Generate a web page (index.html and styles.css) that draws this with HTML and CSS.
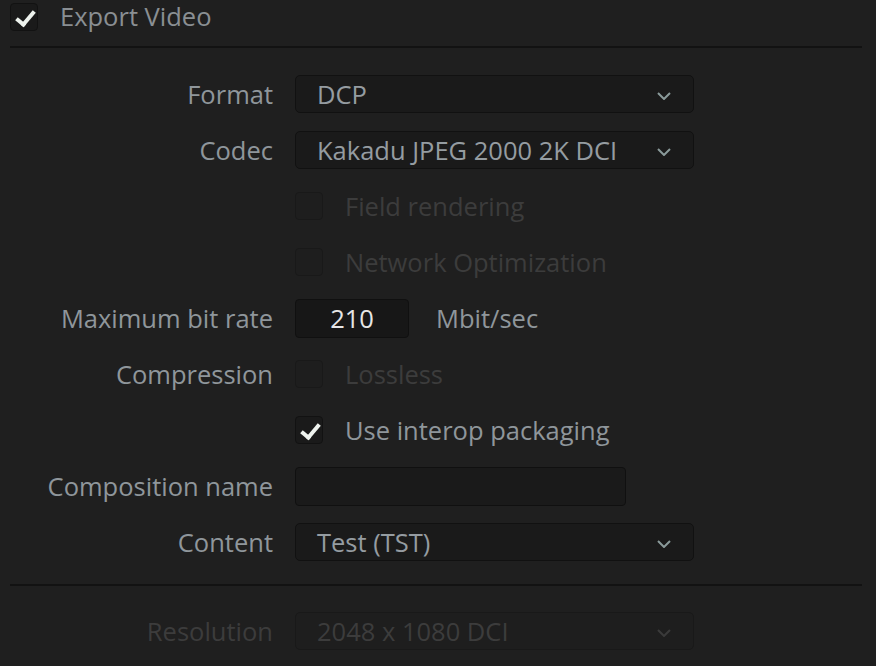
FILE: index.html
```html
<!DOCTYPE html>
<html lang="en">
<head>
	<meta charset="UTF-8">
	<title>Export Video</title>
	<link rel="stylesheet" href="styles.css">
</head>
<body>
	<div class="panel">
		<div class="section-head">
			<span class="check checked"></span>
			<span class="section-title">Export Video</span>
		</div>
		<hr class="divider">

		<div class="form">
			<div class="row">
				<label class="label">Format</label>
				<div class="select wide"><span>DCP</span><svg class="chevron" viewBox="0 0 14 8"><polyline points="1,1 7,7 13,1"/></svg></div>
			</div>
			<div class="row">
				<label class="label">Codec</label>
				<div class="select wide"><span>Kakadu JPEG 2000 2K DCI</span><svg class="chevron" viewBox="0 0 14 8"><polyline points="1,1 7,7 13,1"/></svg></div>
			</div>
			<div class="row disabled">
				<label class="label"></label>
				<span class="check"></span>
				<span class="opt">Field rendering</span>
			</div>
			<div class="row disabled">
				<label class="label"></label>
				<span class="check"></span>
				<span class="opt">Network Optimization</span>
			</div>
			<div class="row">
				<label class="label">Maximum bit rate</label>
				<div class="field num">210</div>
				<span class="unit">Mbit/sec</span>
			</div>
			<div class="row">
				<label class="label">Compression</label>
				<span class="check dim"></span>
				<span class="opt dim">Lossless</span>
			</div>
			<div class="row">
				<label class="label"></label>
				<span class="check checked"></span>
				<span class="opt">Use interop packaging</span>
			</div>
			<div class="row">
				<label class="label">Composition name</label>
				<div class="field name"></div>
			</div>
			<div class="row">
				<label class="label">Content</label>
				<div class="select wide"><span>Test (TST)</span><svg class="chevron" viewBox="0 0 14 8"><polyline points="1,1 7,7 13,1"/></svg></div>
			</div>
		</div>

		<hr class="divider lower">

		<div class="form bottom">
			<div class="row disabled">
				<label class="label">Resolution</label>
				<div class="select wide"><span>2048 x 1080 DCI</span><svg class="chevron" viewBox="0 0 14 8"><polyline points="1,1 7,7 13,1"/></svg></div>
			</div>
		</div>
	</div>
</body>
</html>
```

FILE: styles.css
```css
* {
	margin: 0;
	padding: 0;
	box-sizing: border-box;
}

body {
	font-family: 'Open Sans', 'Noto Sans', sans-serif;
	font-size: 25.5px;
	background: #1f1f1f;
	color: #8f969b;
	width: 876px;
	height: 666px;
	overflow: hidden;
}

.panel {
	padding: 2px 14px 0 10px;
}

.section-head {
	display: flex;
	align-items: center;
	gap: 22px;
	height: 30px;
}

.section-title {
	color: #8a8f93;
	margin-top: -2px;
}

.divider {
	border: none;
	border-top: 2px solid #121212;
	margin-top: 14px;
}

.divider.lower {
	margin-top: 14px;
}

.form {
	display: flex;
	flex-direction: column;
	padding-top: 18px;
}

.form.bottom {
	padding-top: 17px;
}

.row {
	display: flex;
	align-items: center;
	height: 56px;
}

.label {
	width: 263px;
	text-align: right;
	margin-right: 22px;
	white-space: nowrap;
}

.check {
	width: 28px;
	height: 28px;
	border-radius: 4px;
	background: #1a1a1a;
	border: 1px solid #121212;
	position: relative;
	flex: none;
}

.check.checked::after {
	content: "";
	position: absolute;
	left: 9px;
	top: 3px;
	width: 7px;
	height: 15px;
	border: solid #eef3ee;
	border-width: 0 4px 4px 0;
	transform: rotate(40deg);
}

.opt {
	margin-left: 22px;
	color: #8f969b;
}

.row.disabled .label,
.row.disabled .opt,
.row.disabled .select span {
	color: #3c3c3c;
}

.row.disabled .check,
.check.dim {
	background: #1e1e1e;
	border-color: #191919;
}

.opt.dim {
	color: #3c3c3c;
}

.select {
	height: 38px;
	background: #1a1a1a;
	border: 1px solid #111;
	border-radius: 5px;
	display: flex;
	align-items: center;
	justify-content: space-between;
	padding: 0 22px 0 21px;
	color: #959ca1;
}

.select.wide {
	width: 399px;
}

.row.disabled .select {
	background: #1e1e1e;
	border-color: #191919;
}

.chevron {
	width: 14px;
	height: 8px;
	margin-top: 3px;
	fill: none;
	stroke: #8a9a9a;
	stroke-width: 2;
}

.row.disabled .chevron {
	stroke: #3a3a3a;
}

.field {
	height: 39px;
	background: #171717;
	border: 1px solid #101010;
	border-radius: 4px;
}

.field.num {
	width: 114px;
	text-align: center;
	line-height: 37px;
	color: #e6e6e6;
}

.field.name {
	width: 331px;
	background: #1a1a1a;
}

.unit {
	margin-left: 27px;
}
```
